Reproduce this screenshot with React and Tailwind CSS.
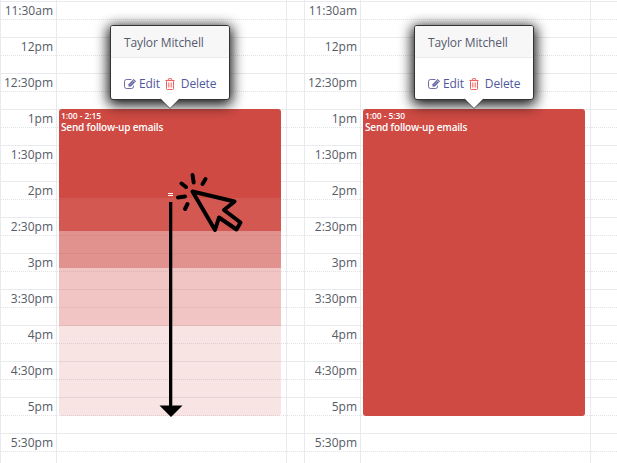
import React from "react";

const slots = [
    "11:30am", "12pm", "12:30pm", "1pm", "1:30pm", "2pm", "2:30pm",
    "3pm", "3:30pm", "4pm", "4:30pm", "5pm", "5:30pm"
];

function EditIcon() {
    return (
        <svg className="w-[13px] h-[12px] mr-[2px] text-[#5c5f9c]" viewBox="0 0 13 12" fill="none" stroke="currentColor">
            <path d="M7.500 1.500H2.500a2 2 0 0 0-2 2v5a2 2 0 0 0 2 2h5a2 2 0 0 0 2-2V7.500" strokeWidth=".9" />
            <path d="M4.500 8.500V6.200L9.700 1l2.300 2.300-5.200 5.200z" fill="currentColor" stroke="none" />
            <path d="M5.500 7.300l4.400-4.400M8.700 1.800l2.400 2.400" stroke="#fff" strokeWidth=".5" />
        </svg>
    );
}

function TrashIcon() {
    return (
        <svg className="w-[10px] h-[12px] ml-[5px] mr-[6px] text-[#f0625f]" viewBox="0 0 10 12" fill="none" stroke="currentColor">
            <path d="M.5 2.500h9M3 2.500l.6-1.800h2.800L7 2.500M1.500 2.500v8a1 1 0 0 0 1 1h5a1 1 0 0 0 1-1v-8" />
            <path d="M3.500 4.500v5M5 4.500v5M6.500 4.500v5" strokeWidth=".7" />
        </svg>
    );
}

function Popover() {
    return (
        <div className="absolute left-[110px] top-[25px] w-[120px] h-[75px] rounded-[3px] border border-[#333] bg-white shadow-[0_3px_13px_2px_rgba(0,0,0,0.95)] text-[12px] tracking-[-0.12px] z-10">
            <div className="h-[32px] rounded-t-[2px] border-b border-[#ebebeb] bg-[#f7f7f7] pl-[13px] leading-[34px] text-[#555b6e]">
                Taylor Mitchell
            </div>
            <div className="flex items-center h-[41px] pl-[13px] pt-[10px] text-[#50599b] whitespace-nowrap">
                <EditIcon />
                <span>Edit</span>
                <TrashIcon />
                <span>Delete</span>
            </div>
            <svg className="absolute left-[49px] top-[72px] w-[20px] h-[11px]" viewBox="0 0 20 11">
                <path d="M0 0h20L10 10z" fill="#fff" />
                <path d="M0 .800L10 10.500 20 .800" fill="none" stroke="#444" strokeWidth=".7" />
            </svg>
        </div>
    );
}

function Event({ time, stretched }) {
    return (
        <div className="absolute left-[59px] top-[109px] w-[222px] h-[307px] rounded-[3px] overflow-hidden text-white">
            {stretched ? (
                <div className="flex flex-col h-full">
                    <div className="h-[89px] bg-[#cf4a43]" />
                    <div className="h-[33px] bg-[#cf4a43]/92" />
                    <div className="h-[37px] bg-[#cf4a43]/60" />
                    <div className="h-[58px] bg-[#cf4a43]/32" />
                    <div className="h-[90px] bg-[#cf4a43]/15" />
                </div>
            ) : (
                <div className="h-full bg-[#cf4a43]" />
            )}
            <div className="absolute left-[2px] top-px font-semibold whitespace-nowrap">
                <div className="text-[8.500px] leading-[11px] tracking-[-0.08px]">{time}</div>
                <div className="text-[10px] leading-[13px] tracking-[-0.18px]">Send follow-up emails</div>
            </div>
        </div>
    );
}

function DragCursor() {
    return (
        <svg className="absolute left-[150px] top-[165px] w-[100px] h-[260px]" viewBox="150 165 100 260" fill="none" stroke="#000">
            <path d="M168 193.500h5M168 195.500h5" stroke="#fff" />
            <path d="M172.500 202v203" stroke="#000" strokeOpacity=".3" />
            <path d="M169 202h3v203.500h10.500L171 417l-11.500-11.500H169z" fill="#000" stroke="none" />
            <path d="M192.500 191.500L234.500 201.500 224 210 240.500 222.500 236.500 229.500 219 217.500 215 230z" strokeWidth="4" strokeLinejoin="round" />
            <path d="M192.500 175l1.200 7.500M205.500 179l-3 5M181.500 183.500l4.500 3.500M178 197.500l7-1M187.500 204l-2.500 5" strokeWidth="4" strokeLinecap="round" />
        </svg>
    );
}

function Calendar({ time, stretched }) {
    return (
        <div className={stretched ? "relative w-[304px] h-[463px] shrink-0" : "relative flex-1 h-[463px]"}>
            <div className="flex h-full pt-px border-l border-[#e9eaee]">
                <div className="w-[55px]">
                    {slots.map(slot => (
                        <div key={slot} className="h-[36px] border-t border-[#e9eaee]">
                            <div className="h-[18px] border-b border-dotted border-[#e2e3e7] pr-[3px] text-right text-[12px] leading-[18px] text-[#555b66]">
                                {slot}
                            </div>
                        </div>
                    ))}
                </div>
                <div className="w-[231px] -mt-px border-x border-[#e9eaee] pt-px">
                    {slots.map(slot => (
                        <div key={slot} className="h-[36px] border-t border-[#e9eaee]">
                            <div className="h-[18px] border-b border-dotted border-[#e2e3e7]" />
                        </div>
                    ))}
                </div>
                <div className="flex-1">
                    {slots.map(slot => (
                        <div key={slot} className="h-[36px] border-t border-[#e9eaee]">
                            <div className="h-[18px] border-b border-dotted border-[#e2e3e7]" />
                        </div>
                    ))}
                </div>
            </div>
            <Event time={time} stretched={stretched} />
            <Popover />
            {stretched && <DragCursor />}
        </div>
    );
}

export default function App() {
    return (
        <div className="flex w-[617px] h-[463px] overflow-hidden bg-white font-['Open_Sans',sans-serif]">
            <Calendar time="1:00 - 2:15" stretched />
            <Calendar time="1:00 - 5:30" />
        </div>
    );
}
